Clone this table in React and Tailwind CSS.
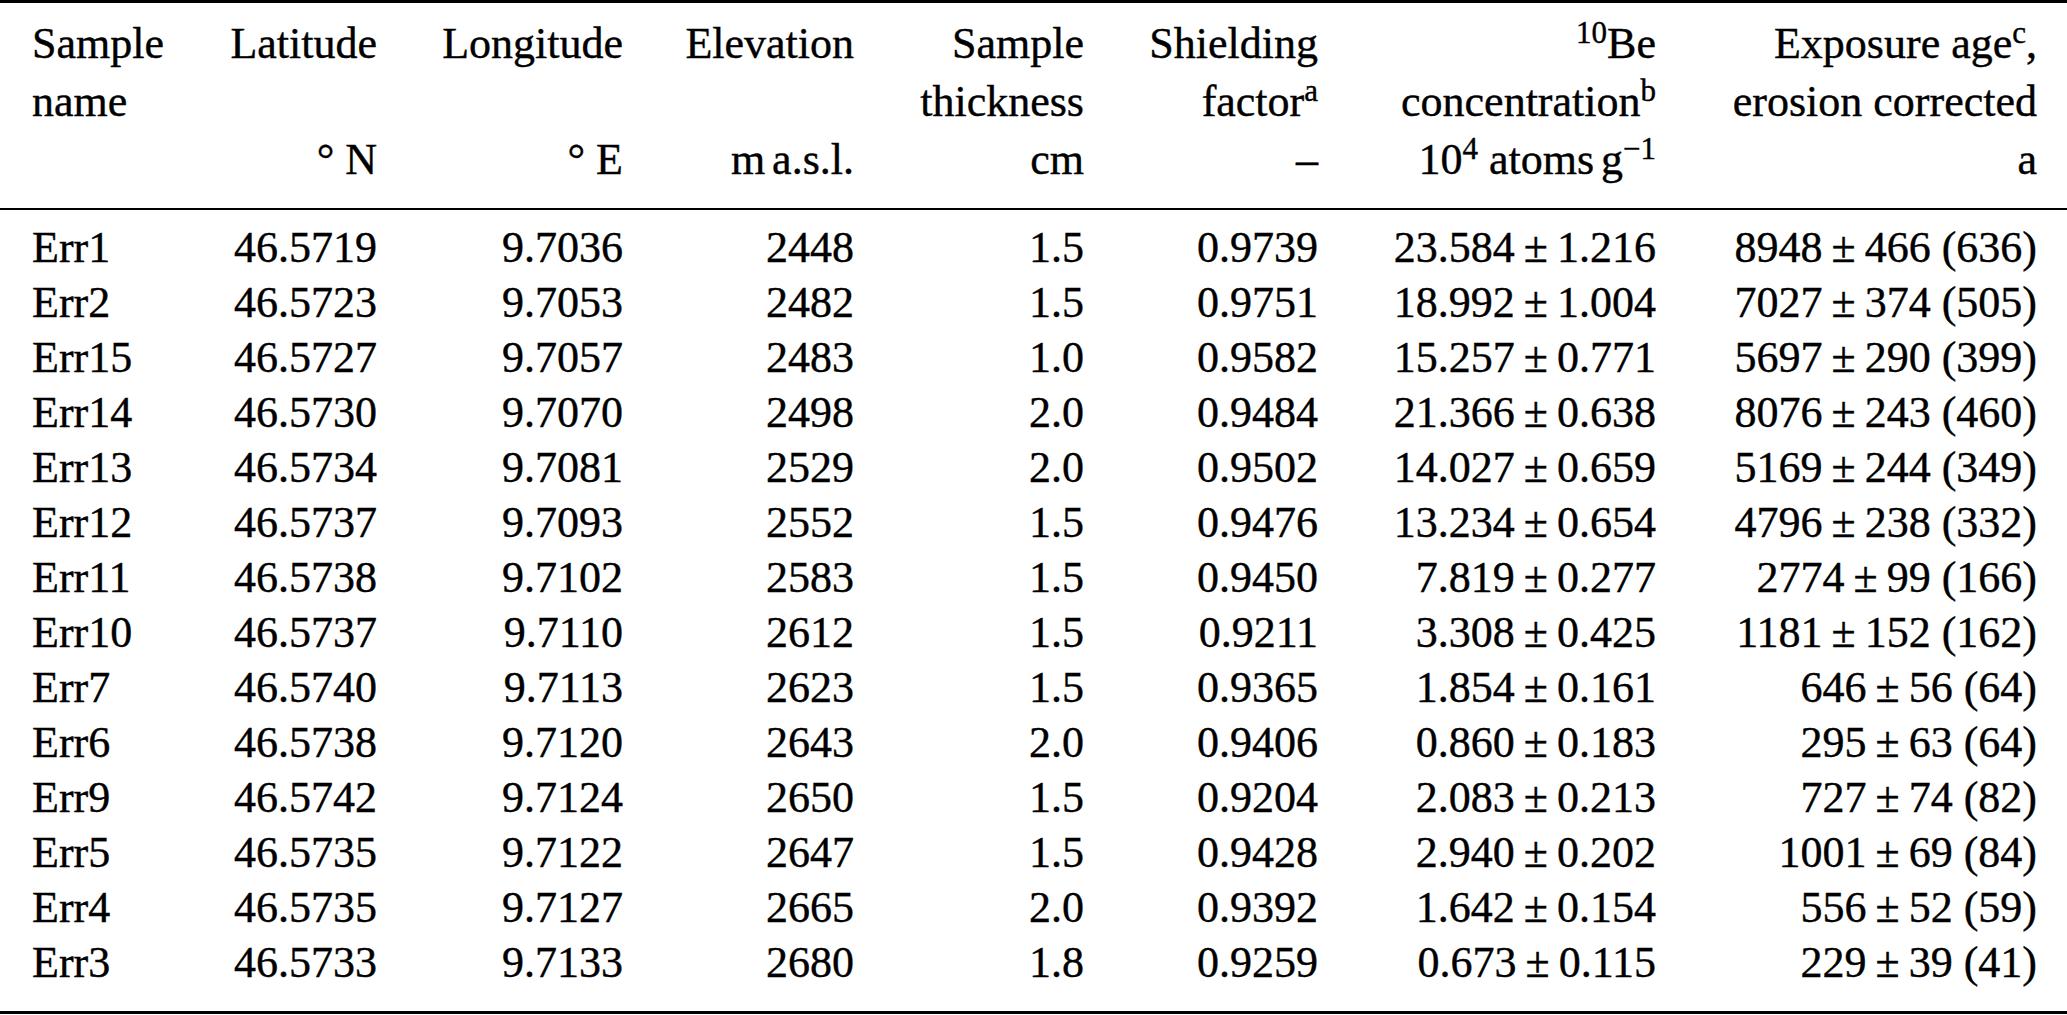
import React from "react";

// column tracks: first column holds the sample name, the rest are right-aligned
const COLS = "grid grid-cols-[200px_177px_246px_231px_230px_234px_338px_381px]";

function Sup({ children }) {
  return <span className="relative bottom-[15px] text-[31px] leading-none">{children}</span>;
}

function Pm({ a, b, tail }) {
  return (
    <>
      {a}
      <span className="mx-[9px]">±</span>
      {b}
      {tail ? <span> {tail}</span> : null}
    </>
  );
}

const HEADER = [
  ["Sample", "name", ""],
  ["Latitude", "", <>°&nbsp;N</>],
  ["Longitude", "", <>°&nbsp;E</>],
  ["Elevation", "", <>m<span className="ml-[7px]">a.s.l.</span></>],
  ["Sample", "thickness", "cm"],
  ["Shielding", <>factor<Sup>a</Sup></>, "–"],
  [
    <><Sup>10</Sup>Be</>,
    <>concentration<Sup>b</Sup></>,
    <>10<Sup>4</Sup> atoms<span className="ml-[7px]">g</span><Sup>−1</Sup></>
  ],
  [<>Exposure age<Sup>c</Sup>,</>, "erosion corrected", "a"]
];

const ROWS = [
  ["Err1", "46.5719", "9.7036", "2448", "1.5", "0.9739", ["23.584", "1.216"], ["8948", "466", "(636)"]],
  ["Err2", "46.5723", "9.7053", "2482", "1.5", "0.9751", ["18.992", "1.004"], ["7027", "374", "(505)"]],
  ["Err15", "46.5727", "9.7057", "2483", "1.0", "0.9582", ["15.257", "0.771"], ["5697", "290", "(399)"]],
  ["Err14", "46.5730", "9.7070", "2498", "2.0", "0.9484", ["21.366", "0.638"], ["8076", "243", "(460)"]],
  ["Err13", "46.5734", "9.7081", "2529", "2.0", "0.9502", ["14.027", "0.659"], ["5169", "244", "(349)"]],
  ["Err12", "46.5737", "9.7093", "2552", "1.5", "0.9476", ["13.234", "0.654"], ["4796", "238", "(332)"]],
  ["Err11", "46.5738", "9.7102", "2583", "1.5", "0.9450", ["7.819", "0.277"], ["2774", "99", "(166)"]],
  ["Err10", "46.5737", "9.7110", "2612", "1.5", "0.9211", ["3.308", "0.425"], ["1181", "152", "(162)"]],
  ["Err7", "46.5740", "9.7113", "2623", "1.5", "0.9365", ["1.854", "0.161"], ["646", "56", "(64)"]],
  ["Err6", "46.5738", "9.7120", "2643", "2.0", "0.9406", ["0.860", "0.183"], ["295", "63", "(64)"]],
  ["Err9", "46.5742", "9.7124", "2650", "1.5", "0.9204", ["2.083", "0.213"], ["727", "74", "(82)"]],
  ["Err5", "46.5735", "9.7122", "2647", "1.5", "0.9428", ["2.940", "0.202"], ["1001", "69", "(84)"]],
  ["Err4", "46.5735", "9.7127", "2665", "2.0", "0.9392", ["1.642", "0.154"], ["556", "52", "(59)"]],
  ["Err3", "46.5733", "9.7133", "2680", "1.8", "0.9259", ["0.673", "0.115"], ["229", "39", "(41)"]]
];

export default function App() {
  return (
    <div className="w-[2067px] h-[1015px] bg-white text-black text-[44px] [font-family:Liberation_Serif,Times_New_Roman,serif] [-webkit-text-stroke:0.4px_black]">
      <div className="border-t-[3px] border-black" />

      <div className={`${COLS} pt-[12px] pb-[19px] pr-[30px] leading-[58px]`}>
        {HEADER.map((lines, i) => (
          <div key={i} className={i === 0 ? "pl-[32px] text-left" : "text-right whitespace-nowrap"}>
            {lines.map((line, j) => (
              <div key={j} className="h-[58px]">{line}</div>
            ))}
          </div>
        ))}
      </div>

      <div className="border-t-2 border-black" />

      <div className="pt-[10px] pb-[21px] pr-[30px] leading-[55px]">
        {ROWS.map((r) => (
          <div key={r[0]} className={`${COLS} h-[55px] whitespace-nowrap`}>
            <div className="pl-[32px]">{r[0]}</div>
            <div className="text-right">{r[1]}</div>
            <div className="text-right">{r[2]}</div>
            <div className="text-right">{r[3]}</div>
            <div className="text-right">{r[4]}</div>
            <div className="text-right">{r[5]}</div>
            <div className="text-right"><Pm a={r[6][0]} b={r[6][1]} /></div>
            <div className="text-right"><Pm a={r[7][0]} b={r[7][1]} tail={r[7][2]} /></div>
          </div>
        ))}
      </div>

      <div className="border-t-[3px] border-black" />
    </div>
  );
}
